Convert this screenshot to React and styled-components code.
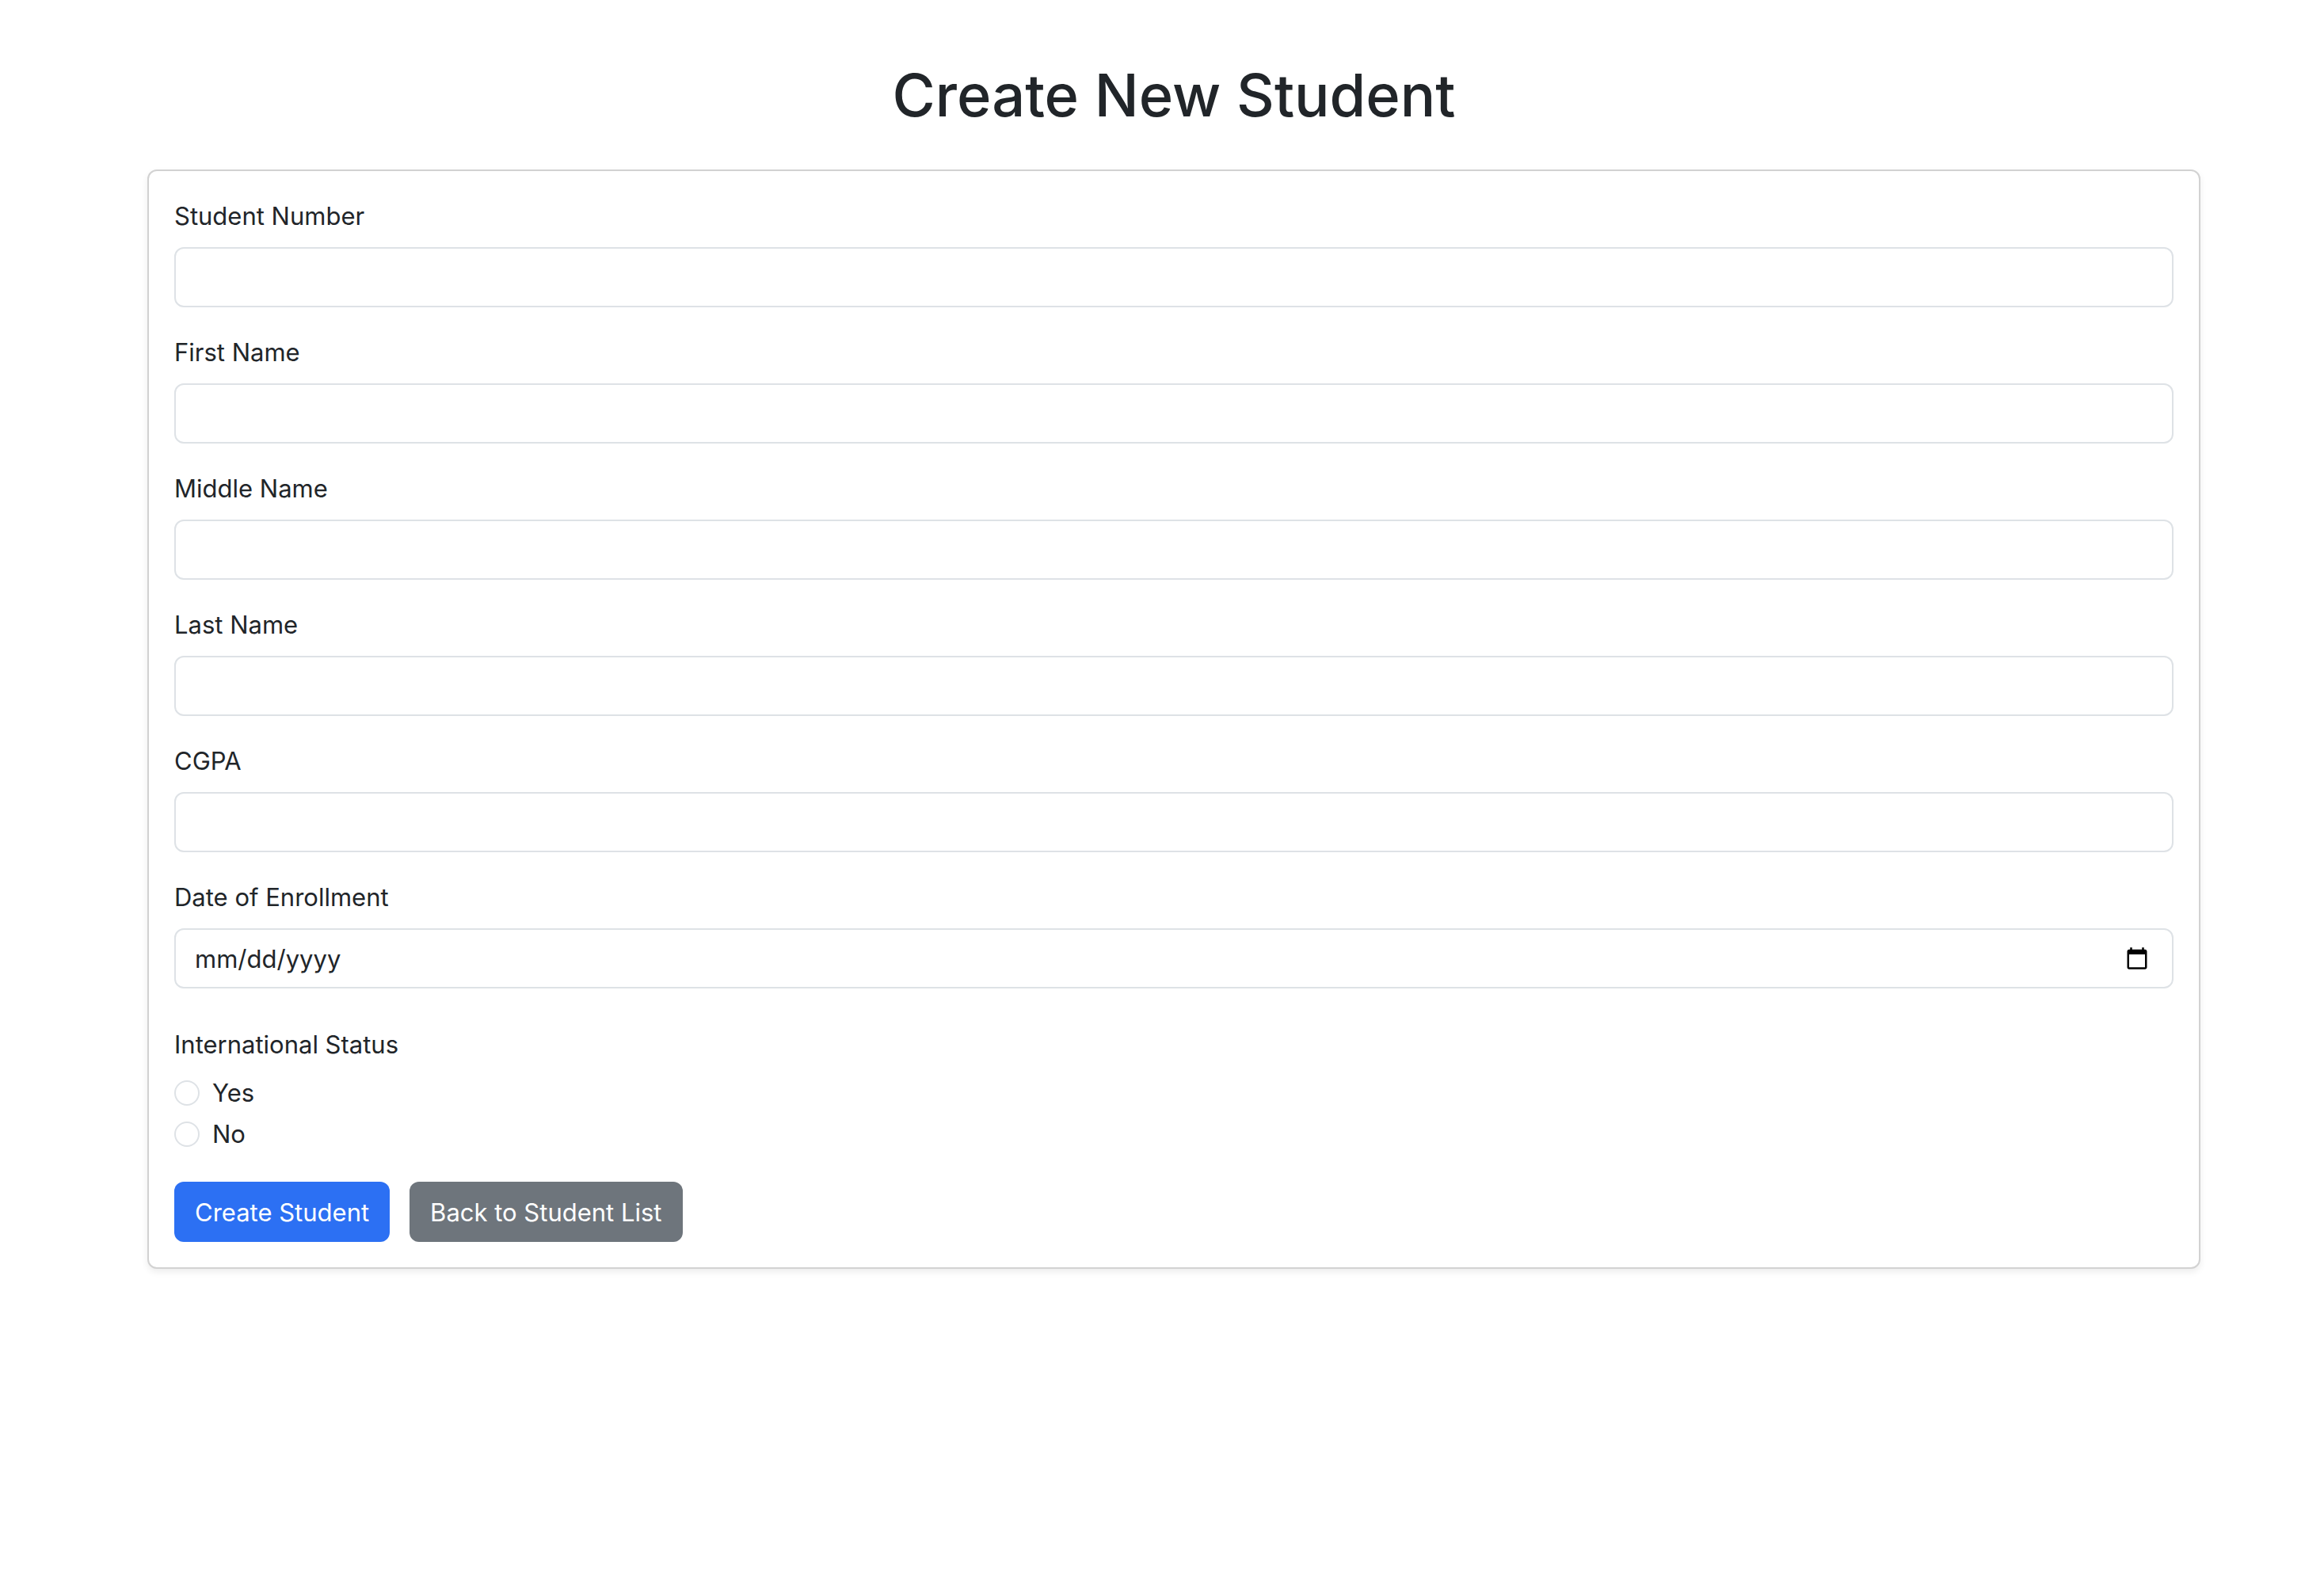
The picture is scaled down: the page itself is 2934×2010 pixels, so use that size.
import React from "react";
import styled, { createGlobalStyle } from "styled-components";

const GlobalStyle = createGlobalStyle`
  *, *::before, *::after {
    box-sizing: border-box;
  }

  body {
    margin: 0;
    background: #fff;
    color: #212529;
    font-family: Inter, "Liberation Sans", sans-serif;
    font-size: 31px;
    line-height: 48px;
  }
`;

const Page = styled.main`
  padding: 72px 0 48px 30px;
`;

const Container = styled.div`
  width: 100%;
  max-width: 2640px;
  margin: 0 auto;
  padding: 0 24px;
`;

const Title = styled.h1`
  margin: 0 0 46px;
  font-size: 74px;
  font-weight: 500;
  line-height: 96px;
  text-align: center;
`;

const Card = styled.form`
  padding: 33px 32px 32px;
  border: 2px solid #d2d2d2;
  border-radius: 12px;
  background: #fff;
  box-shadow: 0 4px 8px rgba(0, 0, 0, 0.075);
`;

const Field = styled.div`
  margin-bottom: 33px;
`;

const Label = styled.label`
  display: block;
  width: fit-content;
  margin-bottom: 15px;
`;

const Input = styled.input`
  display: block;
  width: 100%;
  height: 76px;
  margin: 0;
  padding: 13px 24px 11px;
  border: 2px solid #dee2e6;
  border-radius: 12px;
  background: #fff;
  color: inherit;
  font: inherit;
  appearance: none;

  &:focus {
    border-color: #86b7fe;
    outline: 0;
    box-shadow: 0 0 0 8px rgba(13, 110, 253, 0.25);
  }

  &::-webkit-date-and-time-value {
    height: 48px;
  }

  &::-webkit-datetime-edit {
    display: block;
    padding: 0;
  }

  &::-webkit-datetime-edit-fields-wrapper,
  &::-webkit-datetime-edit-month-field,
  &::-webkit-datetime-edit-day-field,
  &::-webkit-datetime-edit-year-field {
    padding: 0;
  }

  &::-webkit-calendar-picker-indicator {
    width: 32px;
    height: 32px;
    padding: 4px;
    box-sizing: content-box;
  }
`;

const RadioGroup = styled.fieldset`
  min-width: 0;
  margin: 0 0 32px;
  padding: 0;
  border: 0;
`;

const Legend = styled.legend`
  padding: 14px 0 13px;
`;

const RadioRow = styled.div`
  display: flex;
  align-items: center;
  gap: 16px;
  margin-bottom: 4px;
`;

const Radio = styled.input`
  flex: none;
  width: 32px;
  height: 32px;
  margin: 0;
  border: 2px solid #dee2e6;
  border-radius: 50%;
  background: #fff;
  appearance: none;

  &:checked {
    border: 10px solid #2c70f3;
  }
`;

const Actions = styled.div`
  display: flex;
  gap: 25px;
`;

const Button = styled.button`
  padding: 15px 26px 13px;
  border: 0;
  border-radius: 12px;
  background: ${({ $variant }) => ($variant === "primary" ? "#2c70f3" : "#6e757c")};
  color: #fff;
  font: inherit;
  cursor: pointer;
`;

const fields = [
  { id: "studentNumber", label: "Student Number", type: "text" },
  { id: "firstName", label: "First Name", type: "text" },
  { id: "middleName", label: "Middle Name", type: "text" },
  { id: "lastName", label: "Last Name", type: "text" },
  { id: "cgpa", label: "CGPA", type: "text" },
  { id: "enrollmentDate", label: "Date of Enrollment", type: "date" },
];

const statusOptions = ["Yes", "No"];

export default function App() {
  return (
    <>
      <GlobalStyle />
      <Page>
        <Container>
          <Title>Create New Student</Title>
          <Card onSubmit={(event) => event.preventDefault()}>
            {fields.map(({ id, label, type }) => (
              <Field key={id}>
                <Label htmlFor={id}>{label}</Label>
                <Input id={id} name={id} type={type} />
              </Field>
            ))}
            <RadioGroup>
              <Legend>International Status</Legend>
              {statusOptions.map((option) => (
                <RadioRow key={option}>
                  <Radio
                    type="radio"
                    id={`international-${option}`}
                    name="international"
                    value={option}
                  />
                  <label htmlFor={`international-${option}`}>{option}</label>
                </RadioRow>
              ))}
            </RadioGroup>
            <Actions>
              <Button type="submit" $variant="primary">
                Create Student
              </Button>
              <Button type="button" $variant="secondary">
                Back to Student List
              </Button>
            </Actions>
          </Card>
        </Container>
      </Page>
    </>
  );
}
